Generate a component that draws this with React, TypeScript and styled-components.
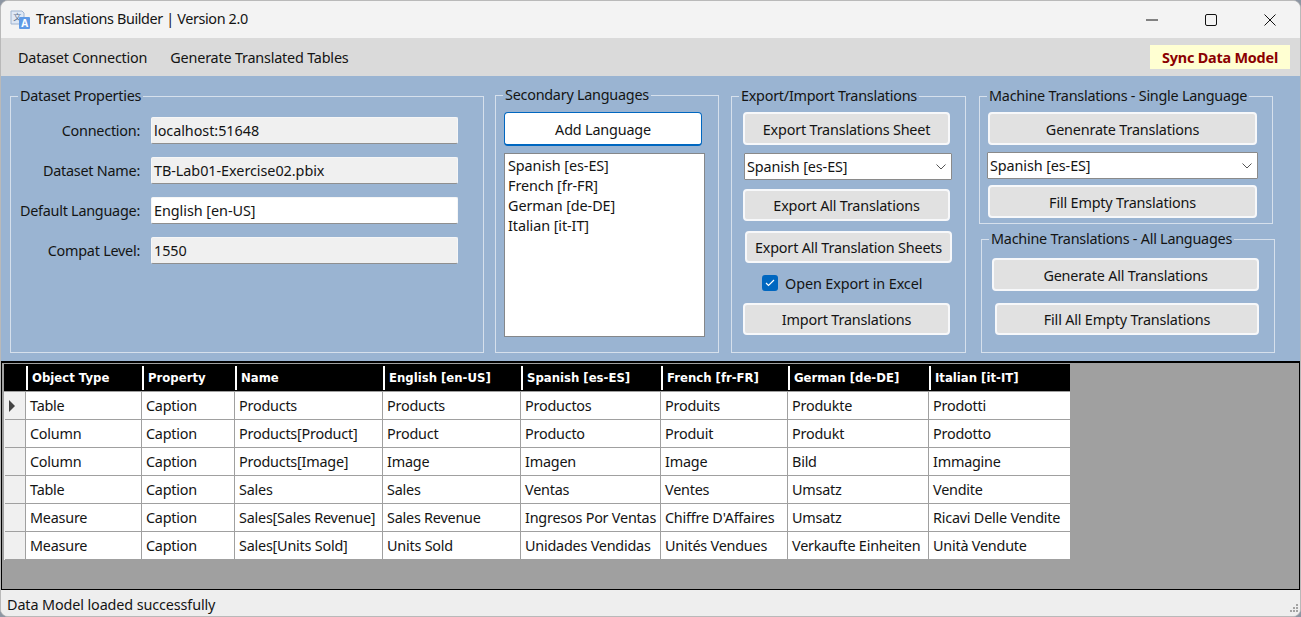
import React from "react";
import styled, { createGlobalStyle } from "styled-components";

const Global = createGlobalStyle`
  html, body { margin: 0; padding: 0; background: #8d96a3; }
  body { width: 1301px; height: 617px; overflow: hidden; font-family: "Noto Sans", sans-serif; }
  * { box-sizing: border-box; }
`;

const Win = styled.div`
  width: 1301px; height: 617px; display: flex; flex-direction: column;
  border: 1px solid #b9b9b9; border-radius: 8px; overflow: hidden;
  color: #141414; font-size: 14.4px; letter-spacing: -0.25px; background: #eee;
`;
const TitleBar = styled.div`
  height: 37px; flex: none; background: #f3f3f3; display: flex; align-items: center; padding: 0 1px 0 9px;
`;
const TitleText = styled.div`
  margin-left: 6px; line-height: 18px; flex: 1; margin-top: -1px; letter-spacing: -0.37px;
`;
const WinBtn = styled.div`
  width: 59px; height: 37px; display: flex; align-items: center; justify-content: center;
`;
const MenuBar = styled.div`
  height: 38px; flex: none; background: #dadada; display: flex; align-items: center; padding-left: 17px;
`;
const MenuItem = styled.div`
  margin-right: 23px; line-height: 18px; padding-top: 1px; letter-spacing: -0.2px;
`;
const Sync = styled.div`
  margin-left: auto; margin-right: 10px; width: 140px; height: 24px; background: #ffffd2; color: #8b0000;
  font-weight: 700; display: flex; align-items: center; justify-content: center; letter-spacing: -0.2px;
`;
const Panel = styled.div`
  height: 285px; flex: none; background: #9ab4d2; display: flex; align-items: flex-start; padding: 11px 0 0 9px;
`;
const Box = styled.fieldset<{ $w: number; $h: number; $ml?: number; $mt?: number }>`
  margin: ${p => p.$mt ?? 0}px 0 0 ${p => p.$ml ?? 0}px; padding: 0;
  width: ${p => p.$w}px; height: ${p => p.$h}px; min-width: 0;
  border: 1px solid #d6e0ec; border-radius: 0;
`;
const Legend = styled.legend`
  margin-left: 7px; padding: 0 2px; line-height: 18px; height: 18px;
`;
const Column = styled.div`
  margin-left: 13px; display: flex; flex-direction: column; width: 296px;
`;
const PropGrid = styled.div`
  display: grid; grid-template-columns: 129px 307px; column-gap: 11px; row-gap: 13px;
  grid-auto-rows: 27px; padding-top: 12px; align-items: center;
`;
const PropLabel = styled.div`
  text-align: right; line-height: 18px;
`;
const Field = styled.div<{ $editable?: boolean }>`
  height: 27px; background: ${p => (p.$editable ? "#ffffff" : "#f0f0f0")};
  border: 1px solid #f6f6f6; border-bottom: 1px solid #8f8f8f; border-radius: 2px;
  padding-left: 2px; line-height: 26px; letter-spacing: -0.05px;
`;
const Stack = styled.div<{ $pt: number; $pl?: number }>`
  display: flex; flex-direction: column; align-items: flex-start;
  padding-top: ${p => p.$pt}px; padding-left: ${p => p.$pl ?? 0}px;
`;
const Btn = styled.div<{ $w: number; $h?: number; $ml?: number; $mt?: number }>`
  width: ${p => p.$w}px; height: ${p => p.$h ?? 33}px;
  margin-left: ${p => p.$ml ?? 0}px; margin-top: ${p => p.$mt ?? 0}px;
  background: #e1e1e1; border: 2px solid #f7f8fa; border-radius: 4px;
  padding-top: ${p => ((p.$h ?? 33) % 2 ? 3 : 1)}px; letter-spacing: -0.18px;
  display: flex; align-items: center; justify-content: center; line-height: 18px; flex: none;
`;
const PrimaryBtn = styled(Btn)`
  background: #ffffff; border: 1px solid #0067c0; border-bottom-width: 2px; padding-top: 3px;
`;
const ListBox = styled.div`
  width: 201px; height: 184px; margin-top: 7px; background: #fff; border: 1px solid #85878a;
  padding: 2px 3px; line-height: 20px; flex: none; letter-spacing: -0.08px;
`;
const ListRow = styled.div` height: 20px; `;
const Select = styled.div<{ $w: number; $ml?: number; $mt?: number }>`
  width: ${p => p.$w}px; height: 27px; flex: none;
  margin-left: ${p => p.$ml ?? 0}px; margin-top: ${p => p.$mt ?? 0}px;
  background: #fff; border: 1px solid #8a8a8a; border-radius: 1px; letter-spacing: -0.1px;
  display: flex; align-items: center; justify-content: space-between; padding: 0 5px 0 2px; line-height: 18px;
`;
const CheckRow = styled.div`
  margin: 12px 0 0 19px; height: 16px; display: flex; align-items: center; gap: 7px; line-height: 16px;
`;
const CheckLabel = styled.span`
  padding-top: 1px; letter-spacing: -0.1px;
`;
const CheckBox = styled.div`
  width: 16px; height: 16px; border-radius: 3px; background: #0067c0; display: flex; align-items: center; justify-content: center; flex: none;
`;
const GridArea = styled.div`
  height: 229px; flex: none; background: #a0a0a0; border: 1px solid #000; border-width: 2px 1px 1px 1px;
  padding: 0 0 0 2px;
`;
const Table = styled.table`
  border-collapse: separate; border-spacing: 0; table-layout: fixed; width: 1066px;
  margin-top: 1px;
`;
const HeadCell = styled.th`
  height: 28px; padding: 0 0 0 6px; background: #000; color: #fff; text-align: left; position: relative;
  font: 700 11.7px/14px "DejaVu Sans", sans-serif; letter-spacing: 0;
  border-bottom: 1px solid #a0a0a0;
  &::before {
    content: ""; position: absolute; left: 0; top: 2px; bottom: 1px; width: 1.5px; background: #fff;
  }
`;
const CornerCell = styled.th`
  height: 28px; padding: 0; background: #000; border-bottom: 1px solid #a0a0a0;
`;
const RowHead = styled.td`
  height: 28px; padding: 0; background: #f0f0f0; border-right: 1px solid #a0a0a0; position: relative;
  &::after {
    content: ""; position: absolute; left: 1px; right: 0; bottom: 0; height: 1px; background: #a0a0a0;
  }
`;
const Arrow = styled.div`
  width: 0; height: 0; border-left: 6px solid #444; border-top: 6px solid transparent; border-bottom: 6px solid transparent;
  margin-left: 5px;
`;
const Cell = styled.td`
  height: 28px; padding: 0 0 0 4px; background: #fff; border-right: 1px solid #a0a0a0; border-bottom: 1px solid #a0a0a0;
  white-space: nowrap; overflow: hidden; line-height: 18px; letter-spacing: -0.22px;
  &:last-child { border-right: 0; }
`;
const Status = styled.div`
  flex: 1; background: #eeeeee; padding: 6px 0 0 6px; line-height: 18px; position: relative; letter-spacing: -0.12px;
`;
const Grip = styled.svg`
  position: absolute; right: 1px; bottom: 1px; width: 12px; height: 12px;
`;

const columns = [
  ["Object Type", 116], ["Property", 93], ["Name", 148], ["English [en-US]", 138],
  ["Spanish [es-ES]", 140], ["French [fr-FR]", 127], ["German [de-DE]", 141], ["Italian [it-IT]", 141],
] as const;

const rows = [
  ["Table", "Caption", "Products", "Products", "Productos", "Produits", "Produkte", "Prodotti"],
  ["Column", "Caption", "Products[Product]", "Product", "Producto", "Produit", "Produkt", "Prodotto"],
  ["Column", "Caption", "Products[Image]", "Image", "Imagen", "Image", "Bild", "Immagine"],
  ["Table", "Caption", "Sales", "Sales", "Ventas", "Ventes", "Umsatz", "Vendite"],
  ["Measure", "Caption", "Sales[Sales Revenue]", "Sales Revenue", "Ingresos Por Ventas", "Chiffre D'Affaires", "Umsatz", "Ricavi Delle Vendite"],
  ["Measure", "Caption", "Sales[Units Sold]", "Units Sold", "Unidades Vendidas", "Unités Vendues", "Verkaufte Einheiten", "Unità Vendute"],
];

const props = [
  ["Connection:", "localhost:51648", false],
  ["Dataset Name:", "TB-Lab01-Exercise02.pbix", false],
  ["Default Language:", "English [en-US]", true],
  ["Compat Level:", "1550", false],
] as const;

const Chevron = () => (
  <svg width="10" height="6" viewBox="0 0 10 6" fill="none" stroke="#555" strokeWidth="1">
    <path d="M0.5 0.5 L5 5 L9.5 0.5" />
  </svg>
);

const AppIcon = () => (
  <svg width="20" height="20" viewBox="0 0 20 20">
    <path d="M1 1h11l2 2v11H1z" fill="#dfe8f5" stroke="#9fb4d0" strokeWidth="1" />
    <text x="7" y="10" fontSize="8" textAnchor="middle" fill="#5a6f8c" fontFamily="Noto Sans CJK SC">文</text>
    <rect x="9" y="7" width="11" height="12" rx="1" fill="#5f9ae6" />
    <text x="14.5" y="17" fontSize="10" fontWeight="700" textAnchor="middle" fill="#fff" fontFamily="Noto Sans">A</text>
  </svg>
);

export default function App() {
  return (
    <Win>
      <Global />
      <TitleBar>
        <AppIcon />
        <TitleText>Translations Builder | Version 2.0</TitleText>
        <WinBtn>
          <svg width="12" height="2" viewBox="0 0 12 2"><path d="M0 1h12" stroke="#111" strokeWidth="1" /></svg>
        </WinBtn>
        <WinBtn>
          <svg width="12" height="12" viewBox="0 0 12 12" fill="none"><rect x="0.5" y="0.5" width="11" height="11" rx="1.5" stroke="#111" /></svg>
        </WinBtn>
        <WinBtn>
          <svg width="12" height="12" viewBox="0 0 12 12" fill="none"><path d="M0.5 0.5l11 11M11.5 0.5l-11 11" stroke="#111" /></svg>
        </WinBtn>
      </TitleBar>
      <MenuBar>
        <MenuItem>Dataset Connection</MenuItem>
        <MenuItem>Generate Translated Tables</MenuItem>
        <Sync>Sync Data Model</Sync>
      </MenuBar>
      <Panel>
        <Box $w={474} $h={266}>
          <Legend>Dataset Properties</Legend>
          <PropGrid>
            {props.map(([label, value, editable]) => (
              <React.Fragment key={label}>
                <PropLabel>{label}</PropLabel>
                <Field $editable={editable}>{value}</Field>
              </React.Fragment>
            ))}
          </PropGrid>
        </Box>
        <Box $w={224} $h={267} $ml={11} $mt={-1}>
          <Legend>Secondary Languages</Legend>
          <Stack $pt={8} $pl={8}>
            <PrimaryBtn $w={198} $h={34}>Add Language</PrimaryBtn>
            <ListBox>
              {["Spanish [es-ES]", "French [fr-FR]", "German [de-DE]", "Italian [it-IT]"].map(l => (
                <ListRow key={l}>{l}</ListRow>
              ))}
            </ListBox>
          </Stack>
        </Box>
        <Box $w={235} $h={266} $ml={12}>
          <Legend>Export/Import Translations</Legend>
          <Stack $pt={7} $pl={11}>
            <Btn $w={207}>Export Translations Sheet</Btn>
            <Select $w={208} $ml={1} $mt={8}>Spanish [es-ES]<Chevron /></Select>
            <Btn $w={207} $h={32} $mt={9}>Export All Translations</Btn>
            <Btn $w={207} $h={32} $ml={2} $mt={10}>Export All Translation Sheets</Btn>
            <CheckRow>
              <CheckBox>
                <svg width="10" height="8" viewBox="0 0 10 8" fill="none"><path d="M1 4l2.5 2.5L9 1" stroke="#fff" strokeWidth="1.2" /></svg>
              </CheckBox>
              <CheckLabel>Open Export in Excel</CheckLabel>
            </CheckRow>
            <Btn $w={207} $h={32} $mt={12}>Import Translations</Btn>
          </Stack>
        </Box>
        <Column>
          <Box $w={294} $h={137}>
            <Legend>Machine Translations - Single Language</Legend>
            <Stack $pt={7} $pl={8}>
              <Btn $w={269}>Genenrate Translations</Btn>
              <Select $w={271} $ml={-1} $mt={7}>Spanish [es-ES]<Chevron /></Select>
              <Btn $w={269} $mt={6}>Fill Empty Translations</Btn>
            </Stack>
          </Box>
          <Box $w={294} $h={123} $ml={2} $mt={6}>
            <Legend>Machine Translations - All Languages</Legend>
            <Stack $pt={10} $pl={10}>
              <Btn $w={267}>Generate All Translations</Btn>
              <Btn $w={264} $h={32} $ml={3} $mt={12}>Fill All Empty Translations</Btn>
            </Stack>
          </Box>
        </Column>
      </Panel>
      <GridArea>
        <Table>
          <colgroup>
            <col width={22} />
            {columns.map(([name, w]) => <col key={name} width={w} />)}
          </colgroup>
          <thead>
            <tr>
              <CornerCell />
              {columns.map(([name]) => <HeadCell key={name}>{name}</HeadCell>)}
            </tr>
          </thead>
          <tbody>
            {rows.map((row, i) => (
              <tr key={i}>
                <RowHead>{i === 0 && <Arrow />}</RowHead>
                {row.map((c, j) => <Cell key={j}>{c}</Cell>)}
              </tr>
            ))}
          </tbody>
        </Table>
      </GridArea>
      <Status>
        Data Model loaded successfully
        <Grip viewBox="0 0 12 12" fill="#a3a3a3">
          <rect x="9" y="1" width="2" height="2" />
          <rect x="6" y="4" width="2" height="2" /><rect x="9" y="4" width="2" height="2" />
          <rect x="3" y="7" width="2" height="2" /><rect x="6" y="7" width="2" height="2" /><rect x="9" y="7" width="2" height="2" />
        </Grip>
      </Status>
    </Win>
  );
}
